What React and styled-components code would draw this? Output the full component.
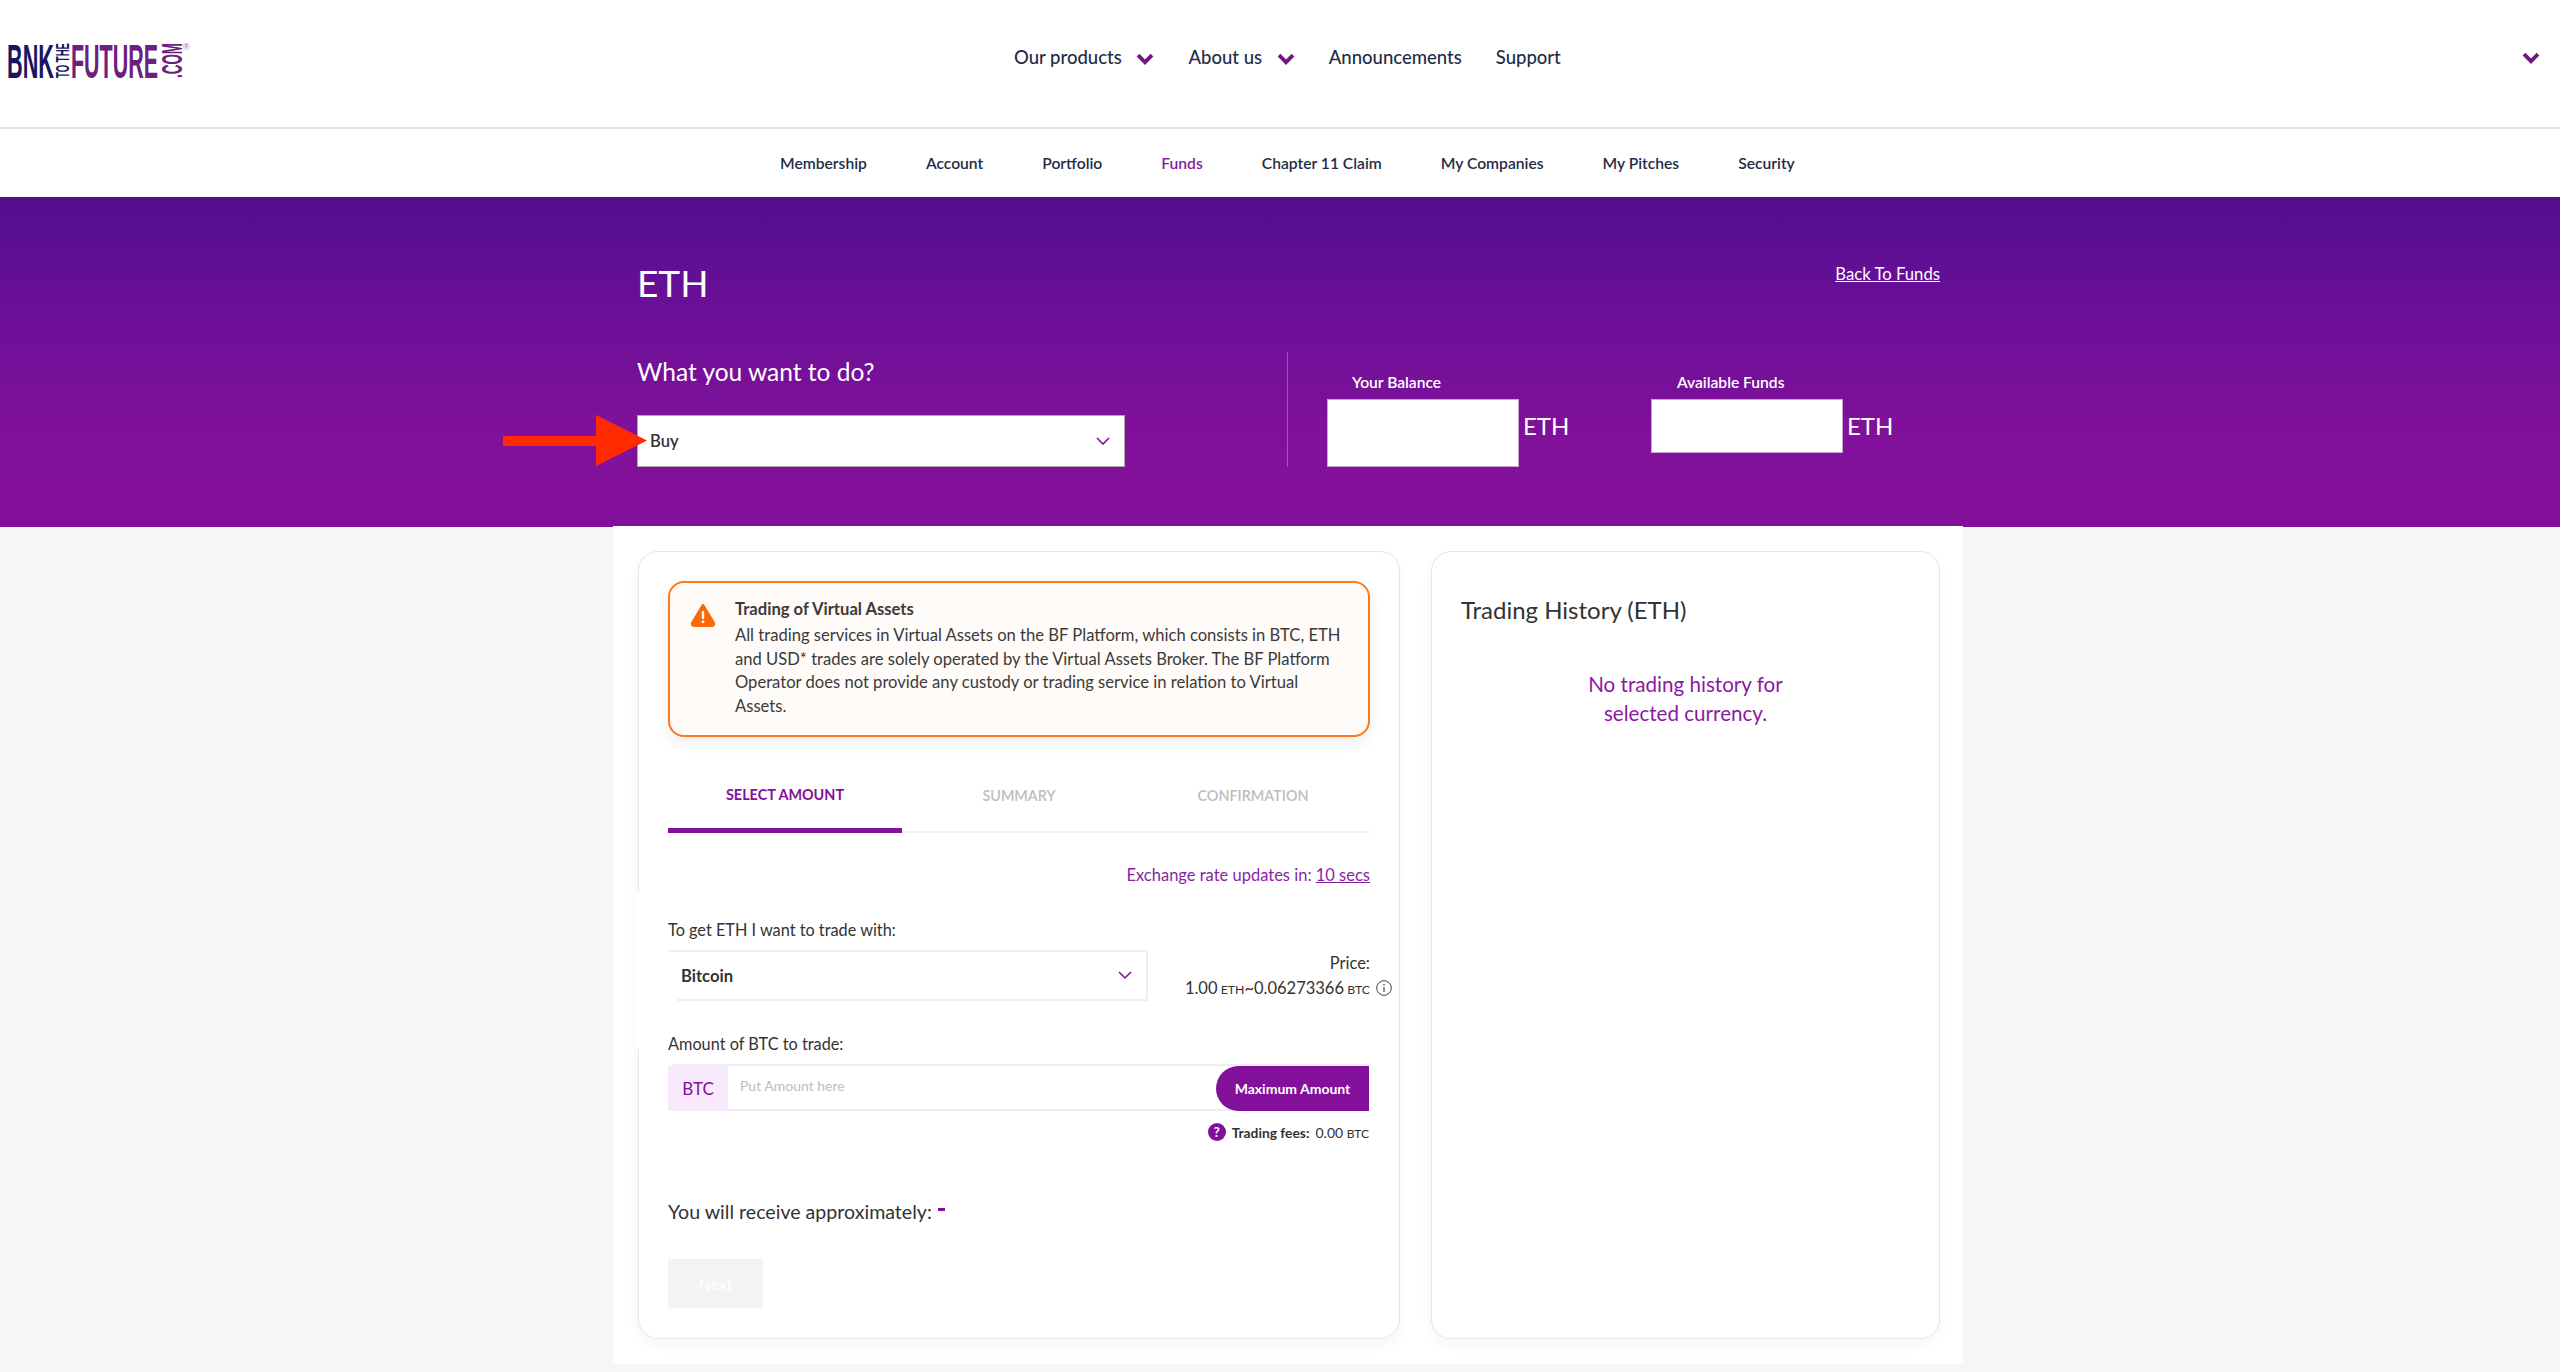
import React from 'react'
import styled, { createGlobalStyle } from 'styled-components'

const GlobalStyle = createGlobalStyle`
  html, body { margin: 0; padding: 0; background: #f6f6f6; }
  body { font-family: Lato, "Open Sans", sans-serif; color: #333; overflow: hidden; }
  * { box-sizing: border-box; }
`

const purple = '#83109a'

const Logo = () => (
  <LogoSvg width="192" height="90" viewBox="0 0 192 90">
    <g fontFamily="'Liberation Sans', sans-serif" fontWeight="700">
      <text x="7" y="78" fontSize="49" fill="#1b1464" textLength="47" lengthAdjust="spacingAndGlyphs">BNK</text>
      <text transform="translate(69 78) rotate(-90)" fontSize="19" fill="#1b1464" textLength="35" lengthAdjust="spacingAndGlyphs">TO THE</text>
      <text x="71" y="78" fontSize="49" fill="#6b2080" textLength="87" lengthAdjust="spacingAndGlyphs">FUTURE</text>
      <text transform="translate(182 78) rotate(-90)" fontSize="30" fill="#6b2080" textLength="35" lengthAdjust="spacingAndGlyphs">.COM</text>
      <text x="183" y="50" fontSize="9" fill="#a56cb4" fontWeight="400">®</text>
    </g>
  </LogoSvg>
)

const Chevron = ({ size = 14, stroke = 1.6 }) => (
  <svg width={size} height={size * 0.6} viewBox="0 0 14 8.4" fill="none">
    <path d="M1 1l6 6 6-6" stroke={purple} strokeWidth={stroke * 14 / size} />
  </svg>
)

const BoldChevron = () => (
  <svg width="18" height="12" viewBox="0 0 18 12" fill="none">
    <path d="M2 2.2l7 7 7-7" stroke="#6f1a80" strokeWidth="3.8" />
  </svg>
)

const App = () => (
  <Page>
    <GlobalStyle />
    <Header>
      <Logo />
      <MainNav>
        <NavItem>Our products <ChevronGap><BoldChevron /></ChevronGap></NavItem>
        <NavItem>About us <ChevronGap><BoldChevron /></ChevronGap></NavItem>
        <NavItem>Announcements</NavItem>
        <NavItem>Support</NavItem>
      </MainNav>
      <HeaderEnd><BoldChevron /></HeaderEnd>
    </Header>
    <SubNav>
      <SubItem>Membership</SubItem>
      <SubItem>Account</SubItem>
      <SubItem>Portfolio</SubItem>
      <SubItem $active>Funds</SubItem>
      <SubItem>Chapter 11 Claim</SubItem>
      <SubItem>My Companies</SubItem>
      <SubItem>My Pitches</SubItem>
      <SubItem>Security</SubItem>
    </SubNav>
    <Hero>
      <HeroTop>
        <CoinTitle>ETH</CoinTitle>
        <BackLink>Back To Funds</BackLink>
      </HeroTop>
      <HeroRow>
        <ActionCol>
          <ActionLabel>What you want to do?</ActionLabel>
          <ActionSelect>
            Buy
            <Chevron />
            <RedArrow width="144" height="51" viewBox="0 0 144 51">
              <path d="M0 21h93V0l51 25.5L93 51V31H0z" fill="#ff2a00" />
            </RedArrow>
          </ActionSelect>
        </ActionCol>
        <Balances>
          <BalanceCol $width={324}>
            <BalanceLabel>Your Balance</BalanceLabel>
            <BalanceRow>
              <BalanceBox $height={68} />
              <BalanceUnit>ETH</BalanceUnit>
            </BalanceRow>
          </BalanceCol>
          <BalanceCol>
            <BalanceLabel $offset={26}>Available Funds</BalanceLabel>
            <BalanceRow>
              <BalanceBox $height={54} />
              <BalanceUnit>ETH</BalanceUnit>
            </BalanceRow>
          </BalanceCol>
        </Balances>
      </HeroRow>
    </Hero>
    <Main>
      <TradeCard>
        <BorderPatch />
        <Alert>
          <AlertIcon width="26" height="24" viewBox="0 0 26 24">
            <path d="M13 2.5L2.5 20a1.6 1.6 0 0 0 1.4 2.4h18.2a1.6 1.6 0 0 0 1.4-2.4z" fill="#f96a09" stroke="#f96a09" strokeWidth="3" strokeLinejoin="round" />
            <rect x="11.8" y="8" width="2.4" height="8" rx="1" fill="#fff" />
            <circle cx="13" cy="18.8" r="1.4" fill="#fff" />
          </AlertIcon>
          <AlertText>
            <AlertTitle>Trading of Virtual Assets</AlertTitle>
            All trading services in Virtual Assets on the BF Platform, which consists in BTC, ETH and USD* trades are solely operated by the Virtual Assets Broker. The BF Platform Operator does not provide any custody or trading service in relation to Virtual Assets.
          </AlertText>
        </Alert>
        <Tabs>
          <Tab $active>SELECT AMOUNT</Tab>
          <Tab>SUMMARY</Tab>
          <Tab>CONFIRMATION</Tab>
        </Tabs>
        <RateNote>Exchange rate updates in: <u>10 secs</u></RateNote>
        <FieldLabel>To get ETH I want to trade with:</FieldLabel>
        <TradeRow>
          <CurrencySelect>Bitcoin<Chevron /></CurrencySelect>
          <PriceBlock>
            <div>Price:</div>
            <PriceLine>
              1.00<small> ETH</small>~0.06273366<small> BTC</small>
              <InfoIcon width="16" height="16" viewBox="0 0 16 16" fill="none">
                <circle cx="8" cy="8" r="7.3" stroke="#444" strokeWidth="1" />
                <path d="M8 7v5" stroke="#444" strokeWidth="1.2" />
                <circle cx="8" cy="4.6" r=".8" fill="#444" />
              </InfoIcon>
            </PriceLine>
          </PriceBlock>
        </TradeRow>
        <AmountLabel>Amount of BTC to trade:</AmountLabel>
        <AmountBox>
          <AmountUnit>BTC</AmountUnit>
          <AmountPlaceholder>Put Amount here</AmountPlaceholder>
          <MaxButton>Maximum Amount</MaxButton>
        </AmountBox>
        <Fees>
          <FeeIcon>?</FeeIcon>
          <b>Trading fees:</b>
          <FeeValue>0.00 <small>BTC</small></FeeValue>
        </Fees>
        <Receive>You will receive approximately: <ReceiveDash /></Receive>
        <NextButton>Next</NextButton>
      </TradeCard>
      <HistoryCard>
        <HistoryTitle>Trading History (ETH)</HistoryTitle>
        <HistoryEmpty>No trading history for<br />selected currency.</HistoryEmpty>
      </HistoryCard>
    </Main>
  </Page>
)

const Page = styled.div`
  width: 2560px;
  height: 1372px;
  overflow: hidden;
  background: #f6f6f6;
`
const Header = styled.header`
  height: 129px;
  background: #fff;
  border-bottom: 2px solid #e4e4e4;
  display: flex;
  align-items: flex-start;
  position: relative;
`
const LogoSvg = styled.svg`
  display: block;
  flex: none;
`
const MainNav = styled.nav`
  display: flex;
  gap: 34px;
  margin-left: 822px;
  padding-top: 45px;
`
const NavItem = styled.a`
  font-size: 18.5px;
  line-height: 24px;
  font-weight: 500;
  color: #1f2d46;
  display: flex;
  white-space: pre;
`
const ChevronGap = styled.span`
  margin-left: 10px;
  padding-top: 8px;
  display: block;
  line-height: 0;
`
const HeaderEnd = styled.div`
  margin-left: auto;
  padding: 52px 20px 0 0;
  line-height: 0;
`
const SubNav = styled.nav`
  height: 68px;
  padding-bottom: 1px;
  background: #fff;
  display: flex;
  align-items: center;
  gap: 59px;
  padding-left: 780px;
`
const SubItem = styled.a`
  font-size: 15.65px;
  font-weight: 600;
  color: ${p => (p.$active ? '#8a1aa0' : '#1f2d46')};
`
const Hero = styled.section`
  height: 330px;
  background: linear-gradient(180deg, #520e8e 0%, #6b1098 35%, #80109a 70%, #84109a 100%);
  padding: 0 620px 0 637px;
  color: #fff;
`
const HeroTop = styled.div`
  display: flex;
  justify-content: space-between;
  align-items: flex-start;
  height: 155px;
  padding-top: 61px;
`
const CoinTitle = styled.h1`
  margin: 0;
  font-size: 37px;
  line-height: 50px;
  font-weight: 400;
`
const BackLink = styled.a`
  font-size: 16.7px;
  line-height: 20px;
  margin-top: 6px;
  text-decoration: underline;
`
const HeroRow = styled.div`
  display: flex;
  height: 115px;
`
const ActionCol = styled.div`
  width: 650px;
  flex: none;
`
const ActionLabel = styled.div`
  font-size: 24.5px;
  line-height: 30px;
  margin-top: 5px;
  margin-bottom: 28px;
`
const ActionSelect = styled.div`
  width: 488px;
  height: 52px;
  background: #fff;
  border: 1.5px solid #aaa;
  color: #333;
  font-size: 16.6px;
  font-weight: 600;
  padding: 0 14px 0 12px;
  display: flex;
  align-items: center;
  justify-content: space-between;
  position: relative;
`
const RedArrow = styled.svg`
  position: absolute;
  left: -135px;
  top: -1px;
`
const Balances = styled.div`
  flex: 1;
  display: flex;
  border-left: 1px solid rgba(255, 255, 255, 0.28);
  padding-left: 39px;
`
const BalanceCol = styled.div`
  width: ${p => (p.$width ? `${p.$width}px` : 'auto')};
  flex: none;
`
const BalanceLabel = styled.div`
  font-size: 15.6px;
  font-weight: 600;
  line-height: 20px;
  margin: 20px 0 7px ${p => p.$offset || 25}px;
`
const BalanceRow = styled.div`
  display: flex;
  align-items: flex-start;
  gap: 4px;
`
const BalanceBox = styled.div`
  width: 192px;
  height: ${p => p.$height}px;
  background: #fff;
  border: 1px solid #c9a4d4;
`
const BalanceUnit = styled.span`
  font-size: 24px;
  font-weight: 400;
  line-height: 54px;
`
const Main = styled.main`
  width: 1350px;
  height: 838px;
  margin-left: 613px;
  margin-top: -1px;
  position: relative;
  background: #fff;
  display: flex;
  gap: 31px;
  padding: 25px 23px 25px 25px;
`
const Card = styled.section`
  background: #fff;
  border: 1.5px solid #e6e6e6;
  border-radius: 20px;
  box-shadow: 0 6px 14px rgba(0, 0, 0, 0.04);
  position: relative;
`
const TradeCard = styled(Card)`
  width: 762px;
  flex: none;
  padding: 29px 29px 0;
`
const BorderPatch = styled.div`
  position: absolute;
  left: -3px;
  top: 340px;
  width: 6px;
  height: 157px;
  background: #fff;
`
const HistoryCard = styled(Card)`
  flex: 1;
  padding: 0 29px;
`
const Alert = styled.div`
  height: 156px;
  border: 2px solid #fb7a1e;
  border-radius: 16px;
  background: #fffbf8;
  box-shadow: 0 6px 14px rgba(0, 0, 0, 0.07);
  display: flex;
  gap: 19px;
  padding: 13px 25px 0 20px;
  align-items: flex-start;
`
const AlertIcon = styled.svg`
  margin-top: 7px;
  flex: none;
`
const AlertText = styled.div`
  font-size: 16.6px;
  line-height: 23.7px;
  color: #3a3a3a;
  flex: 1;
`
const AlertTitle = styled.div`
  font-weight: 700;
  line-height: 26px;
  margin-bottom: 2px;
`
const Tabs = styled.div`
  display: flex;
  margin-top: 27px;
  height: 69px;
  border-bottom: 2px solid #f4f4f4;
`
const Tab = styled.div`
  flex: 1;
  text-align: center;
  font-size: 14.4px;
  font-weight: ${p => (p.$active ? 700 : 600)};
  color: ${p => (p.$active ? purple : '#bdbdbd')};
  padding-top: ${p => (p.$active ? 21 : 22)}px;
  line-height: 20px;
  border-bottom: ${p => (p.$active ? `5px solid ${purple}` : 'none')};
  height: ${p => (p.$active ? '69px' : 'auto')};
`
const RateNote = styled.div`
  text-align: right;
  font-size: 16.5px;
  line-height: 20px;
  color: #8a1fa5;
  margin-top: 32px;
`
const FieldLabel = styled.div`
  font-size: 16.3px;
  line-height: 20px;
  color: #333;
  margin-top: 35px;
`
const TradeRow = styled.div`
  display: flex;
  justify-content: space-between;
  margin-top: 10px;
`
const CurrencySelect = styled.div`
  width: 480px;
  height: 51px;
  border: 2px solid #eee;
  border-left: none;
  font-size: 16.6px;
  font-weight: 700;
  color: #333;
  display: flex;
  align-items: center;
  justify-content: space-between;
  padding: 0 14px 0 13px;
  position: relative;
  &::after {
    content: '';
    position: absolute;
    left: 0;
    bottom: -2px;
    width: 9px;
    height: 2px;
    background: #fff;
  }
`
const PriceBlock = styled.div`
  text-align: right;
  font-size: 16.5px;
  line-height: 25px;
  padding-top: 1px;
  color: #333;
`
const PriceLine = styled.div`
  position: relative;
  small { font-size: 12.3px; }
`
const InfoIcon = styled.svg`
  position: absolute;
  right: -22px;
  top: 4px;
`
const AmountLabel = styled(FieldLabel)`
  margin-top: 32px;
`
const AmountBox = styled.div`
  height: 47px;
  margin-top: 10px;
  margin-right: 1px;
  border-top: 2px solid #eee;
  border-bottom: 2px solid #eee;
  border-radius: 8px 0 0 8px;
  display: flex;
  align-items: stretch;
`
const AmountUnit = styled.div`
  width: 60px;
  background: #f8eafc;
  color: ${purple};
  font-size: 17px;
  display: flex;
  align-items: center;
  justify-content: center;
  margin-bottom: -2px;
`
const AmountPlaceholder = styled.div`
  flex: 1;
  padding: 11px 0 0 12px;
  font-size: 14px;
  color: #bdbdbd;
`
const MaxButton = styled.button`
  width: 153px;
  border: none;
  margin-bottom: -2px;
  background: ${purple};
  border-radius: 24px 0 0 24px;
  color: #fff;
  font-family: inherit;
  font-size: 14px;
  font-weight: 700;
`
const Fees = styled.div`
  display: flex;
  justify-content: flex-end;
  align-items: center;
  gap: 6px;
  margin-top: 12px;
  margin-right: 1px;
  font-size: 13.8px;
  color: #333;
`
const FeeIcon = styled.span`
  width: 18px;
  height: 18px;
  border-radius: 50%;
  background: ${purple};
  color: #fff;
  font-weight: 700;
  font-size: 13px;
  display: flex;
  align-items: center;
  justify-content: center;
`
const FeeValue = styled.span`
  font-size: 14px;
  small { font-size: 12px; }
`
const Receive = styled.div`
  font-size: 19.6px;
  line-height: 24px;
  color: #333;
  margin-top: 59px;
  display: flex;
  white-space: pre;
`
const ReceiveDash = styled.span`
  width: 7px;
  height: 3px;
  margin: 8px 0 0 1px;
  background: ${purple};
`
const NextButton = styled.button`
  display: block;
  width: 95px;
  height: 49px;
  margin-top: 35px;
  border: none;
  background: #f3f3f3;
  color: #fff;
  font-family: inherit;
  font-size: 16px;
`
const HistoryTitle = styled.h2`
  margin: 42px 0 0;
  font-size: 24px;
  line-height: 32px;
  font-weight: 400;
  color: #333;
`
const HistoryEmpty = styled.p`
  margin: 44px 0 0;
  text-align: center;
  font-size: 20.6px;
  line-height: 29px;
  color: #8a1a9f;
`

export default App
